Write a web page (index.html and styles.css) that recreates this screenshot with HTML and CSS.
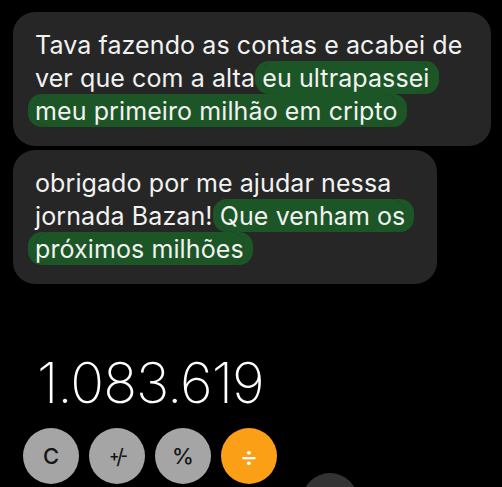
FILE: index.html
```html
<!DOCTYPE html>
<html lang="pt-BR">
<head>
  <meta charset="UTF-8">
  <title>Primeiro milhão</title>
  <link rel="stylesheet" href="styles.css">
</head>
<body>

  <div class="chat">
    <p class="bubble first">
      Tava fazendo as contas e acabei de ver que com a alta <span class="mark">eu ultrapassei meu primeiro milhão em cripto</span>
    </p>
    <p class="bubble second">
      obrigado por me ajudar nessa jornada Bazan! <span class="mark">Que venham os próximos milhões</span>
    </p>
  </div>

  <div class="calc">
    <div class="display">1.083.619</div>
    <div class="keys">
      <div class="key gray">C</div>
      <div class="key gray small"><sup>+</sup>/<sub>-</sub></div>
      <div class="key gray">%</div>
      <div class="key orange">÷</div>
    </div>
    <div class="key dark"></div>
  </div>

</body>
</html>
```

FILE: styles.css
```css
html, body {
  height: 487px;
  overflow: hidden;
}
body {
  margin: 0;
  background: #000;
  color: #f2f2f2;
  font-family: Inter, "Liberation Sans", sans-serif;
}
.chat {
  padding: 12px 0 0 13px;
}
.bubble {
  margin: 0 0 4px;
  padding: 17px 20px 18px 22px;
  background: #262626;
  border-radius: 22px;
  font-size: 25px;
  line-height: 33px;
  letter-spacing: 0.1px;
  box-sizing: border-box;
}
.first { width: 478px; }
.second { width: 424px; }
.mark {
  background: #1c5626;
  border-radius: 14px;
  padding: 2px 0 1px;
  -webkit-box-decoration-break: clone;
  box-decoration-break: clone;
  box-shadow: -7px 0 0 #1c5626, 9px 0 0 #1c5626;
}
.calc {
  padding: 0 0 0 23px;
}
.display {
  margin: 71px 0 0 14px;
  font-size: 56px;
  font-weight: 200;
  line-height: 56px;
  color: #fff;
  letter-spacing: -1px;
}
.keys {
  display: flex;
  gap: 10px;
  margin-top: 17px;
}
.key {
  width: 56px;
  height: 56px;
  border-radius: 50%;
  display: flex;
  align-items: center;
  justify-content: center;
  font-size: 22px;
  font-weight: 500;
  flex: none;
}
.gray {
  background: #a5a5a5;
  color: #151515;
}
.orange {
  background: #fb9f17;
  color: #fff;
  font-size: 28px;
  font-weight: 400;
}
.small {
  font-size: 21px;
  font-weight: 400;
  letter-spacing: -3px;
  line-height: 1;
}
.small sup, .small sub {
  font-size: 15px;
  font-weight: 600;
  line-height: 0;
}
.small sup { vertical-align: 5px; }
.small sub { vertical-align: -3px; }
.dark {
  background: #333;
  margin: -11px 0 0 279px;
}
```
